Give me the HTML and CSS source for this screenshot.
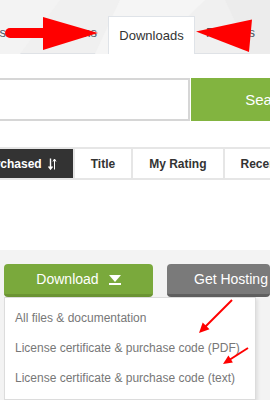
FILE: index.html
```html
<!DOCTYPE html>
<html>
<head>
<meta charset="utf-8">
<link rel="stylesheet" href="styles.css">
</head>
<body>
<div class="page">
  <header class="tabs-bar">
    <svg class="tabs-bg" width="270" height="54" viewBox="0 0 270 54" aria-hidden="true">
      <polygon points="120,0 205,0 150,54 95,54" fill="#f5f5f5"/>
      <polygon points="225,0 270,0 270,54 250,54" fill="#ececec"/>
      <polygon points="0,0 60,0 20,54 0,54" fill="#f3f3f3"/>
    </svg>
    <nav class="tabs">
      <a class="tab">Followers</a>
      <a class="tab">Hidden items</a>
      <a class="tab tab-active">Downloads</a>
      <a class="tab">Reviews</a>
      <a class="tab">Refunds</a>
    </nav>
  </header>

  <section class="main">
    <form class="search">
      <input class="search-input" type="text">
      <button class="search-btn" type="button">Search</button>
    </form>

    <div class="sort">
      <span class="sort-item sort-active">Date Purchased
        <svg class="sort-icon" width="9" height="12" viewBox="0 0 9 12"><path d="M2.5 0.5V10.5M0.5 8.5L2.5 11L4.5 8.5" fill="none" stroke="#fff" stroke-width="1.4"/><path d="M6.5 11.5V1.5M5 3.5L6.5 1L8 3.5" fill="none" stroke="#fff" stroke-width="1"/></svg>
      </span>
      <span class="sort-item">Title</span>
      <span class="sort-item">My Rating</span>
      <span class="sort-item">Recent</span>
    </div>
  </section>

  <section class="actions">
    <div class="btn-row">
      <div class="dl-wrap">
        <button class="btn btn-green" type="button">Download
          <svg class="dl-icon" width="12" height="12" viewBox="0 0 12 12"><polygon points="0,2 12,2 6,9" fill="#fff"/><rect x="0" y="10" width="12" height="2" fill="#fff"/></svg>
        </button>
        <ul class="dropdown">
          <li>All files &amp; documentation</li>
          <li>License certificate &amp; purchase code (PDF)</li>
          <li>License certificate &amp; purchase code (text)</li>
        </ul>
      </div>
      <button class="btn btn-gray" type="button">Get Hosting</button>
    </div>
  </section>

  <svg class="annot" width="270" height="400" viewBox="0 0 270 400" aria-hidden="true">
    <line x1="10" y1="33" x2="50" y2="33" stroke="#ff0000" stroke-width="10" stroke-linecap="round"/>
    <polygon points="43,17 98,33 43,50" fill="#ff0000"/>
    <polygon points="196,31.5 252,19.5 249,52" fill="#ff0000"/>
    <line x1="232" y1="300" x2="205" y2="327" stroke="#ff0000" stroke-width="2"/>
    <polygon points="199,333 209.5,329.3 202.7,322.5" fill="#ff0000"/>
    <line x1="248" y1="348" x2="230" y2="359.5" stroke="#ff0000" stroke-width="2"/>
    <polygon points="223,364 232.9,362.6 228.4,355.6" fill="#ff0000"/>
  </svg>
</div>
</body>
</html>
```

FILE: styles.css
```css
* { box-sizing: border-box; }
html, body {
  margin: 0;
  padding: 0;
  width: 270px;
  height: 400px;
  overflow: hidden;
  background: #fff;
  font-family: "Liberation Sans", Arial, sans-serif;
}
.page {
  position: relative;
  width: 270px;
  height: 400px;
  overflow: hidden;
  display: flex;
  flex-direction: column;
}

/* tabs */
.tabs-bar {
  position: relative;
  height: 54px;
  background: #f0f0f0;
  border-bottom: 1px solid #dfe2e6;
  display: flex;
  align-items: flex-end;
  flex: 0 0 auto;
}
.tabs-bg {
  position: absolute;
  left: 0;
  top: 0;
}
.tabs {
  position: relative;
  display: flex;
  margin-left: -57px;
  margin-bottom: -1px;
  white-space: nowrap;
}
.tab {
  height: 38px;
  padding: 0 6.5px 7px;
  display: flex;
  align-items: center;
  font-size: 13px;
  color: #4a5563;
  border: 1px solid transparent;
  border-bottom: none;
}
.tab-active {
  width: 87px;
  justify-content: center;
  padding: 0;
  margin: 0 3.5px;
  background: #fff;
  color: #333;
  border-color: #dfe3e8;
}

/* search */
.main {
  flex: 0 0 auto;
}
.search {
  display: flex;
  margin: 24px 0 0 -4px;
  height: 43px;
}
.search-input {
  flex: 0 0 194px;
  height: 43px;
  border: 2px solid #d6d6d6;
  background: #fff;
  margin: 0;
  outline: none;
}
.search-btn {
  flex: 0 0 156px;
  height: 43px;
  margin: 0 0 0 1px;
  border: none;
  background: #82b440;
  color: #fff;
  font-family: inherit;
  font-size: 15px;
}

/* sort */
.sort {
  display: flex;
  gap: 2px;
  padding: 2px;
  background: #e6e6e6;
  margin: 26px 0 0 -67px;
  width: max-content;
  height: 33px;
}
.sort-item {
  display: flex;
  align-items: center;
  gap: 6px;
  padding: 0 16px;
  background: #fff;
  color: #333;
  font-size: 12px;
  font-weight: bold;
  white-space: nowrap;
}
.sort-active {
  background: #333;
  color: #fff;
}

/* actions */
.actions {
  flex: 1 1 auto;
  margin-top: 70px;
  background: #f3f3f3;
  padding: 14px 0 0 4px;
}
.btn-row {
  display: flex;
  gap: 14px;
}
.dl-wrap {
  position: relative;
}
.btn {
  height: 33px;
  border: none;
  border-radius: 4px;
  font-family: inherit;
  font-size: 14px;
  color: #fff;
  display: flex;
  align-items: center;
  justify-content: center;
  white-space: nowrap;
  padding: 0;
}
.btn-green {
  width: 149px;
  background: #7aa93c;
  border-bottom: 3px solid #6b9433;
  gap: 10px;
}
.btn-gray {
  width: 140px;
  background: #7a7a7a;
  border-bottom: 3px solid #5f5f5f;
  justify-content: flex-start;
  padding-left: 27px;
}
.dropdown {
  position: absolute;
  left: 0;
  top: 33px;
  width: 252px;
  margin: 0;
  padding: 5px 0 6px;
  list-style: none;
  background: #fff;
  border: 1px solid #dcdcdc;
  box-shadow: 2px 2px 3px rgba(0,0,0,0.08);
  z-index: 2;
}
.dropdown li {
  height: 30px;
  line-height: 30px;
  padding-left: 10px;
  font-size: 12px;
  color: #777;
  white-space: nowrap;
}

.annot {
  position: absolute;
  left: 0;
  top: 0;
  z-index: 5;
  pointer-events: none;
}
```
